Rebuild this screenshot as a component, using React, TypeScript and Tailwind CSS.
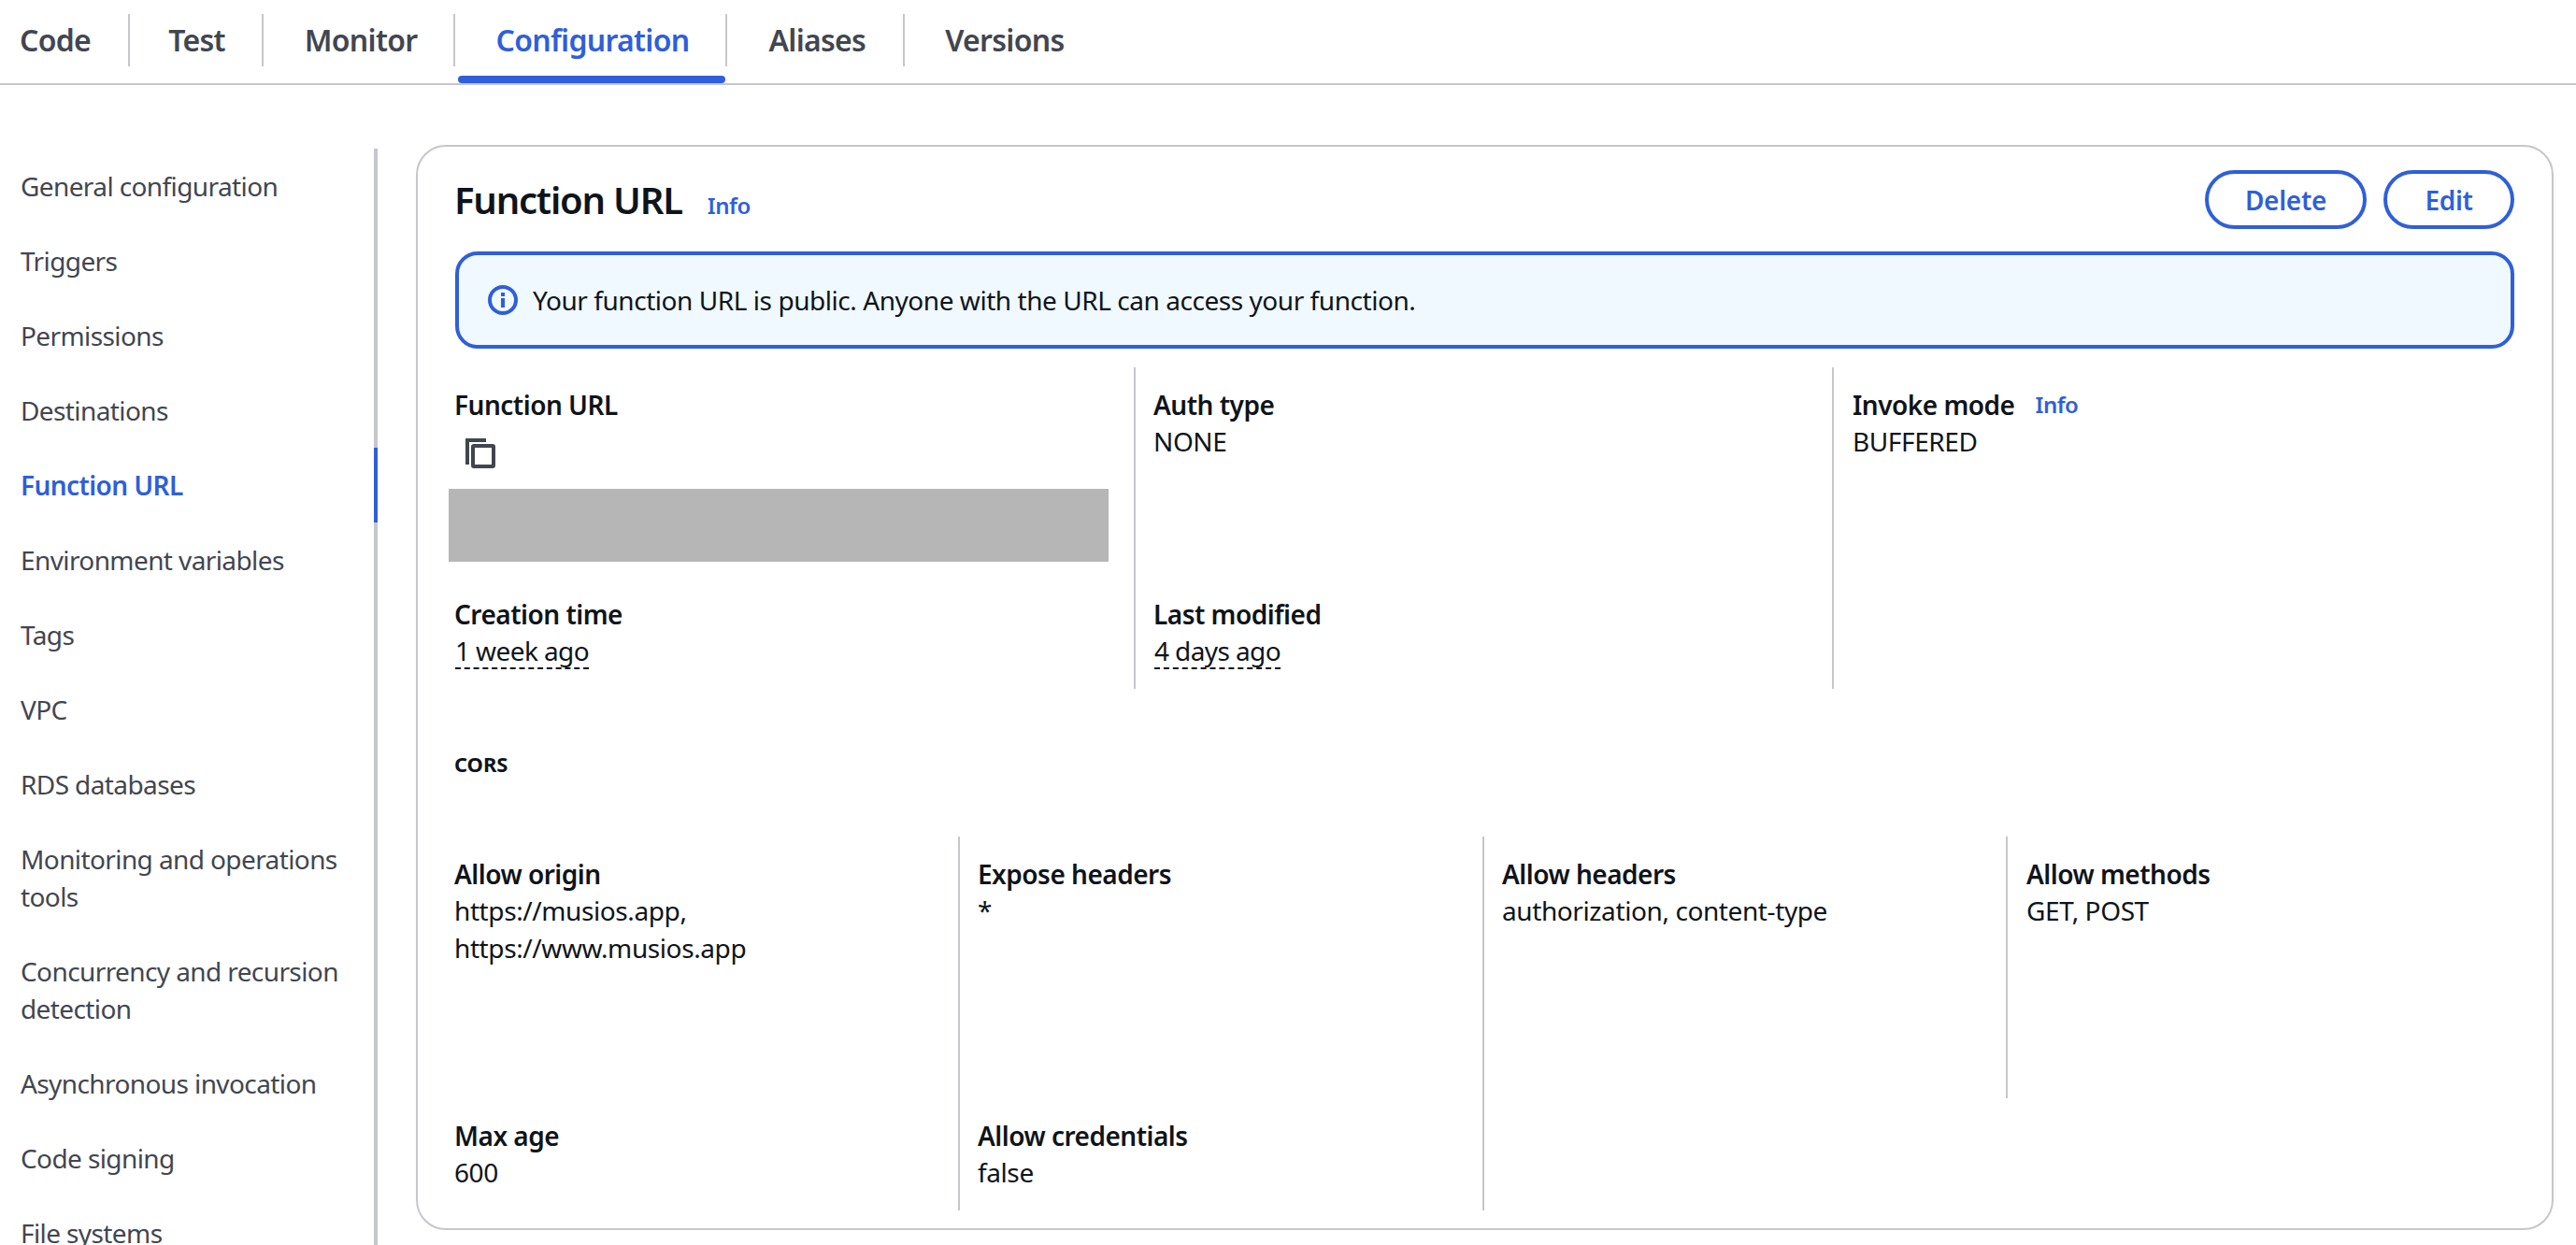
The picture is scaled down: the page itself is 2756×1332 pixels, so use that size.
import React from "react";

const font = { fontFamily: '"Noto Sans", sans-serif' };

function Tab({ label, active, last, pad }: { label: string; active?: boolean; last?: boolean; pad: string }) {
  return (
    <div className="relative h-[56px] flex items-center">
      <div className={`h-full flex items-center text-[32px] font-semibold tracking-[-0.7px] border-r-2 ${last ? "border-transparent" : "border-[#c6c6cd]"} ${pad} ${active ? "text-[#2f5fd9]" : "text-[#424650]"}`}>
        {label}
      </div>
      {active && <div className="absolute left-[3px] right-[2px] top-[66px] h-[8px] rounded-[4px] bg-[#2f5fd9]" />}
    </div>
  );
}

function Nav({ children, active }: { children: React.ReactNode; active?: boolean }) {
  return (
    <div className={`relative pr-[30px] py-[20px] text-[28px] leading-[40px] tracking-[-0.6px] ${active ? "font-semibold tracking-[-0.5px] text-[#2f5fd9]" : "text-[#424650]"}`}>
      {children}
      {active && <div className="absolute right-[-4px] top-0 bottom-0 w-[4px] bg-[#2f5fd9]" />}
    </div>
  );
}

function Label({ children }: { children: React.ReactNode }) {
  return <div className="-ml-[1px] text-[28px] leading-[40px] font-semibold tracking-[-0.5px] text-[#0f141a]">{children}</div>;
}
function Value({ children }: { children: React.ReactNode }) {
  return <div className="-ml-[1px] -mt-[1px] mb-[1px] text-[28px] leading-[40px] tracking-[-0.4px] text-[#0f141a]">{children}</div>;
}
function Dashed({ children }: { children: React.ReactNode }) {
  return <span className="inline-block ml-[1px] leading-[36px] tracking-[-0.6px] border-b-2 border-dashed border-[#0f141a]">{children}</span>;
}
function InfoLink() {
  return <span className="text-[24px] font-semibold tracking-[-0.5px] text-[#2f5fd9]">Info</span>;
}

export default function App() {
  return (
    <div style={font} className="w-[2756px] h-[1332px] overflow-hidden bg-white">
      <div className="h-[91px] pt-[15px] border-b-2 border-[#c6c6cd] flex items-start">
        <Tab label="Code" pad="pl-[21px] pr-[40px]" />
        <Tab label="Test" pad="pl-[41px] pr-[39px]" />
        <Tab label="Monitor" pad="pl-[44px] pr-[39px]" />
        <Tab label="Configuration" active pad="pl-[43px] pr-[39px]" />
        <Tab label="Aliases" pad="pl-[44px] pr-[40px]" />
        <Tab label="Versions" last pad="pl-[43px] pr-[40px]" />
      </div>

      <div className="flex pt-[68px]">
        <div className="w-[404px] shrink-0 pl-[22px] border-r-4 border-[#c6c6cd] h-[1300px]">
          <Nav>General configuration</Nav>
          <Nav>Triggers</Nav>
          <Nav>Permissions</Nav>
          <Nav>Destinations</Nav>
          <Nav active>Function URL</Nav>
          <Nav>Environment variables</Nav>
          <Nav>Tags</Nav>
          <Nav>VPC</Nav>
          <Nav>RDS databases</Nav>
          <Nav>Monitoring and operations tools</Nav>
          <Nav>Concurrency and recursion detection</Nav>
          <Nav>Asynchronous invocation</Nav>
          <Nav>Code signing</Nav>
          <Nav>File systems</Nav>
        </div>

        <div className="ml-[41px] -mt-[4px] w-[2287px] h-[1161px] shrink-0 border-2 border-[#c6c6cd] rounded-[32px] pl-[40px] pr-[40px] pt-[24px]">
          <div className="flex items-center justify-between h-[65px]">
            <div className="flex items-baseline gap-[27px]">
              <span className="-ml-[1px] text-[40px] font-semibold tracking-[-1.2px] text-[#0f141a]">Function URL</span>
              <InfoLink />
            </div>
            <div className="flex gap-[18px]">
              <button className="w-[173px] h-[63px] rounded-full border-4 border-[#2f5fd9] text-[28px] font-semibold tracking-[-0.3px] text-[#2f5fd9]">Delete</button>
              <button className="w-[140px] h-[63px] rounded-full border-4 border-[#2f5fd9] text-[28px] font-semibold tracking-[-0.3px] text-[#2f5fd9]">Edit</button>
            </div>
          </div>

          <div className="mt-[23px] h-[104px] rounded-[24px] border-4 border-[#2f5fd9] bg-[#f0f9ff] flex items-center pl-[31px] gap-[16px]">
            <svg width="32" height="32" viewBox="0 0 32 32" fill="none" className="shrink-0">
              <circle cx="16" cy="16" r="14" stroke="#2f5fd9" strokeWidth="4" />
              <rect x="14" y="14" width="4" height="10" fill="#2f5fd9" />
              <rect x="14" y="8" width="4" height="4" fill="#2f5fd9" />
            </svg>
            <span className="text-[28px] tracking-[-0.45px] text-[#0f141a]">Your function URL is public. Anyone with the URL can access your function.</span>
          </div>

          <div className="-ml-[21px] mt-[20px] grid grid-cols-[747px_747px_747px]">
            <div className="pl-[21px] pt-[20px] pb-[16px] h-[224px]">
              <Label>Function URL</Label>
              <svg width="32" height="32" viewBox="0 0 32 32" fill="none" className="ml-[11px] mt-[16px]">
                <path d="M22 2H2v26" stroke="#424650" strokeWidth="4" />
                <rect x="8" y="8" width="22" height="22" rx="1" stroke="#424650" strokeWidth="4" />
              </svg>
              <div className="mt-[22px] -ml-[7px] w-[706px] h-[78px] bg-[#b6b6b6]" />
            </div>
            <div className="border-l-2 border-[#c6c6cd] pl-[20px] pt-[20px]">
              <Label>Auth type</Label>
              <Value>NONE</Value>
            </div>
            <div className="border-l-2 border-[#c6c6cd] pl-[21px] pt-[20px]">
              <div className="flex items-center gap-[22px]">
                <Label>Invoke mode</Label>
                <InfoLink />
              </div>
              <Value>BUFFERED</Value>
            </div>
            <div className="pl-[21px] pt-[20px] pb-[20px] h-[120px]">
              <Label>Creation time</Label>
              <Value><Dashed>1 week ago</Dashed></Value>
            </div>
            <div className="border-l-2 border-[#c6c6cd] pl-[20px] pt-[20px] pb-[20px]">
              <Label>Last modified</Label>
              <Value><Dashed>4 days ago</Dashed></Value>
            </div>
            <div className="border-l-2 border-[#c6c6cd]" />
          </div>

          <div className="-ml-[1px] mt-[64px] text-[22px] leading-[32px] font-bold tracking-[-0.1px] text-[#0f141a]">CORS</div>

          <div className="-ml-[23px] mt-[62px] grid grid-cols-[561px_561px_560px_560px]">
            <div className="pl-[23px] pt-[20px] h-[280px]">
              <Label>Allow origin</Label>
              <Value>https://musios.app,<br />https://www.musios.app</Value>
            </div>
            <div className="border-l-2 border-[#c6c6cd] pl-[20px] pt-[20px]">
              <Label>Expose headers</Label>
              <Value>*</Value>
            </div>
            <div className="border-l-2 border-[#c6c6cd] pl-[20px] pt-[20px]">
              <Label>Allow headers</Label>
              <Value>authorization, content-type</Value>
            </div>
            <div className="border-l-2 border-[#c6c6cd] pl-[21px] pt-[20px]">
              <Label>Allow methods</Label>
              <Value>GET, POST</Value>
            </div>
            <div className="pl-[23px] pt-[20px] h-[120px]">
              <Label>Max age</Label>
              <Value>600</Value>
            </div>
            <div className="border-l-2 border-[#c6c6cd] pl-[20px] pt-[20px]">
              <Label>Allow credentials</Label>
              <Value>false</Value>
            </div>
            <div className="border-l-2 border-[#c6c6cd]" />
            <div />
          </div>
        </div>
      </div>
    </div>
  );
}
